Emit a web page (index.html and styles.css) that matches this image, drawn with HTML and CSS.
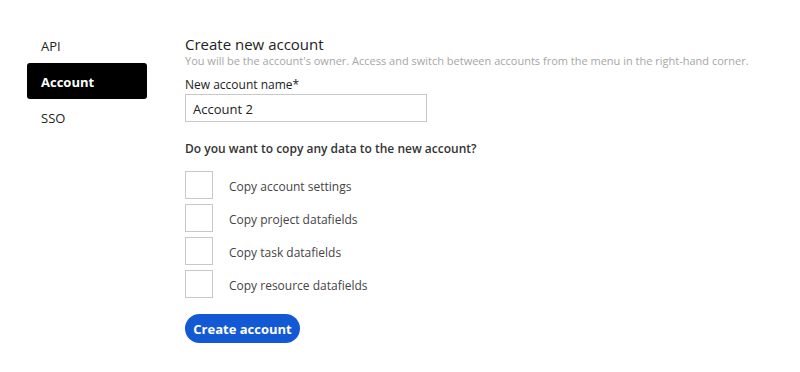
FILE: index.html
```html
<!DOCTYPE html>
<html lang="en">
<head>
<meta charset="utf-8">
<title>Create new account</title>
<link rel="stylesheet" href="styles.css">
</head>
<body>
<div class="page">
  <nav class="sidebar">
    <a class="nav-item">API</a>
    <a class="nav-item active">Account</a>
    <a class="nav-item">SSO</a>
  </nav>
  <main class="content">
    <h1 class="title">Create new account</h1>
    <p class="subtitle">You will be the account's owner. Access and switch between accounts from the menu in the right-hand corner.</p>
    <label class="field-label">New account name*</label>
    <div class="input">Account 2</div>
    <p class="question">Do you want to copy any data to the new account?</p>
    <div class="options">
      <div class="option"><span class="checkbox"></span><span class="option-label">Copy account settings</span></div>
      <div class="option"><span class="checkbox"></span><span class="option-label">Copy project datafields</span></div>
      <div class="option"><span class="checkbox"></span><span class="option-label">Copy task datafields</span></div>
      <div class="option"><span class="checkbox"></span><span class="option-label">Copy resource datafields</span></div>
    </div>
    <button class="primary">Create account</button>
  </main>
</div>
</body>
</html>
```
FILE: styles.css
```css
* { box-sizing: border-box; }
html, body { margin: 0; padding: 0; background: #fff; }
body {
  font-family: "Open Sans", "Noto Sans", "Liberation Sans", sans-serif;
  color: #222;
}
.page {
  display: flex;
  padding: 27px 0 0 27px;
  gap: 38px;
}
.sidebar {
  width: 120px;
  display: flex;
  flex-direction: column;
}
.nav-item {
  height: 36px;
  display: flex;
  align-items: center;
  padding: 2px 0 0 14px;
  font-size: 13px;
  color: #222;
  border-radius: 3px;
}
.nav-item.active {
  background: #000;
  color: #fff;
  font-weight: 700;
}
.content {
  padding-top: 7px;
  display: flex;
  flex-direction: column;
  align-items: flex-start;
}
.title {
  margin: 0;
  font-size: 15px;
  line-height: 20px;
  font-weight: 400;
  color: #222;
}
.subtitle {
  margin: 0;
  font-size: 11px;
  line-height: 14px;
  color: #a6a6a6;
}
.field-label {
  margin-top: 9px;
  font-size: 12px;
  line-height: 16px;
  color: #222;
}
.input {
  margin-top: 1px;
  width: 242px;
  height: 28px;
  border: 1px solid #c8c8c8;
  padding: 1px 7px 0;
  display: flex;
  align-items: center;
  font-size: 13px;
  color: #222;
}
.question {
  margin: 19px 0 0;
  font-size: 12px;
  line-height: 16px;
  font-weight: 600;
  color: #333;
}
.options {
  margin-top: 14px;
  display: flex;
  flex-direction: column;
  gap: 5px;
}
.option {
  display: flex;
  align-items: center;
  gap: 16px;
}
.checkbox {
  width: 28px;
  height: 28px;
  border: 1px solid #c8c8c8;
  background: #fff;
}
.option-label {
  padding-top: 2px;
  font-size: 12px;
  color: #444;
}
.primary {
  margin-top: 16px;
  height: 29px;
  width: 115px;
  border: none;
  border-radius: 15px;
  background: #1459d4;
  color: #fff;
  font-family: inherit;
  font-size: 13px;
  font-weight: 700;
  padding: 0;
}
```
